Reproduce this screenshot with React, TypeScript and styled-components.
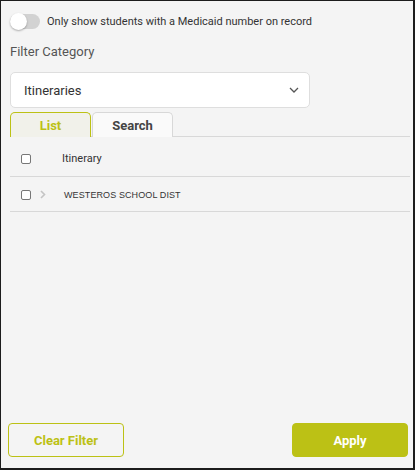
import React from 'react';
import styled, { createGlobalStyle } from 'styled-components';

const olive = '#bcc115';

const Global = createGlobalStyle`
  body {
    margin: 0;
    font-family: Roboto, "Liberation Sans", Arial, sans-serif;
  }
`;

const Panel = styled.div`
  box-sizing: border-box;
  width: 415px;
  height: 470px;
  background: #f4f4f4;
  border: 1px solid #1c1c1c;
  border-right-width: 2px;
  border-bottom-width: 2px;
  display: flex;
  flex-direction: column;
`;

const Body = styled.div`
  flex: 1;
  padding: 12px 3px 0 9px;
  display: flex;
  flex-direction: column;
`;

const ToggleRow = styled.label`
  display: flex;
  align-items: center;
  gap: 7px;
  font-size: 11px;
  color: #333;
  height: 17px;
`;

const Track = styled.span`
  position: relative;
  width: 30px;
  height: 15px;
  border-radius: 8px;
  background: #d2d2d2;
`;

const Knob = styled.span`
  position: absolute;
  left: 0;
  top: -1px;
  width: 17px;
  height: 17px;
  border-radius: 50%;
  background: #fff;
  box-shadow: 0 1px 2px rgba(0, 0, 0, 0.3);
`;

const Label = styled.div`
  margin-top: 14px;
  font-size: 13px;
  color: #555;
`;

const Select = styled.div`
  margin-top: 13px;
  box-sizing: border-box;
  width: 300px;
  height: 36px;
  background: #fff;
  border: 1px solid #dedede;
  border-radius: 5px;
  display: flex;
  align-items: center;
  justify-content: space-between;
  padding: 0 10px 0 13px;
  font-size: 13px;
  color: #333;
`;

const Tabs = styled.div`
  margin-top: 4px;
  display: flex;
  gap: 1px;
  border-bottom: 1px solid #d8d8d8;
`;

const Tab = styled.div<{ active?: boolean }>`
  box-sizing: border-box;
  width: 81px;
  height: 25px;
  margin-bottom: -1px;
  display: flex;
  align-items: center;
  justify-content: center;
  font-size: 13px;
  font-weight: 700;
  border: 1px solid ${(p) => (p.active ? olive : '#d8d8d8')};
  border-bottom: none;
  border-radius: 5px 5px 0 0;
  background: ${(p) => (p.active ? '#f1f1ea' : '#fafafa')};
  color: ${(p) => (p.active ? olive : '#444')};
`;

const Row = styled.div<{ h: number; top?: number }>`
  box-sizing: border-box;
  height: ${(p) => p.h}px;
  padding-top: ${(p) => p.top || 0}px;
  display: flex;
  align-items: center;
  border-bottom: 1px solid #d8d8d8;
  padding-left: 11px;
`;

const Check = styled.span`
  box-sizing: border-box;
  width: 10px;
  height: 10px;
  border: 1px solid #777;
  border-radius: 2px;
  background: #fff;
`;

const HeadText = styled.span`
  margin-left: 31px;
  font-size: 11px;
  color: #333;
`;

const Chevron = styled.span`
  margin-left: 9px;
  display: flex;
`;

const RowText = styled.span`
  margin-left: 18px;
  font-family: "Liberation Sans", Arial, sans-serif;
  font-size: 9px;
  color: #333;
  letter-spacing: 0.1px;
`;

const Footer = styled.div`
  display: flex;
  justify-content: space-between;
  padding: 0 5px 11px 7px;
`;

const Button = styled.button<{ primary?: boolean }>`
  box-sizing: border-box;
  width: 116px;
  height: 34px;
  border-radius: 4px;
  border: 1px solid ${olive};
  background: ${(p) => (p.primary ? olive : 'transparent')};
  color: ${(p) => (p.primary ? '#fff' : olive)};
  font-family: Roboto, "Liberation Sans", Arial, sans-serif;
  font-size: 13px;
  font-weight: 700;
`;

export default function App() {
  return (
    <Panel>
      <Global />
      <Body>
        <ToggleRow>
          <Track>
            <Knob />
          </Track>
          Only show students with a Medicaid number on record
        </ToggleRow>
        <Label>Filter Category</Label>
        <Select>
          Itineraries
          <svg width="10" height="6" viewBox="0 0 10 6">
            <path d="M1 1l4 4 4-4" fill="none" stroke="#555" strokeWidth="1.3" />
          </svg>
        </Select>
        <Tabs>
          <Tab active>List</Tab>
          <Tab>Search</Tab>
        </Tabs>
        <Row h={40} top={4}>
          <Check />
          <HeadText>Itinerary</HeadText>
        </Row>
        <Row h={35} top={1}>
          <Check />
          <Chevron>
            <svg width="6" height="9" viewBox="0 0 6 9">
              <path d="M1 1l3.5 3.5L1 8" fill="none" stroke="#c4c4c4" strokeWidth="1.6" />
            </svg>
          </Chevron>
          <RowText>WESTEROS SCHOOL DIST</RowText>
        </Row>
      </Body>
      <Footer>
        <Button>Clear Filter</Button>
        <Button primary>Apply</Button>
      </Footer>
    </Panel>
  );
}
